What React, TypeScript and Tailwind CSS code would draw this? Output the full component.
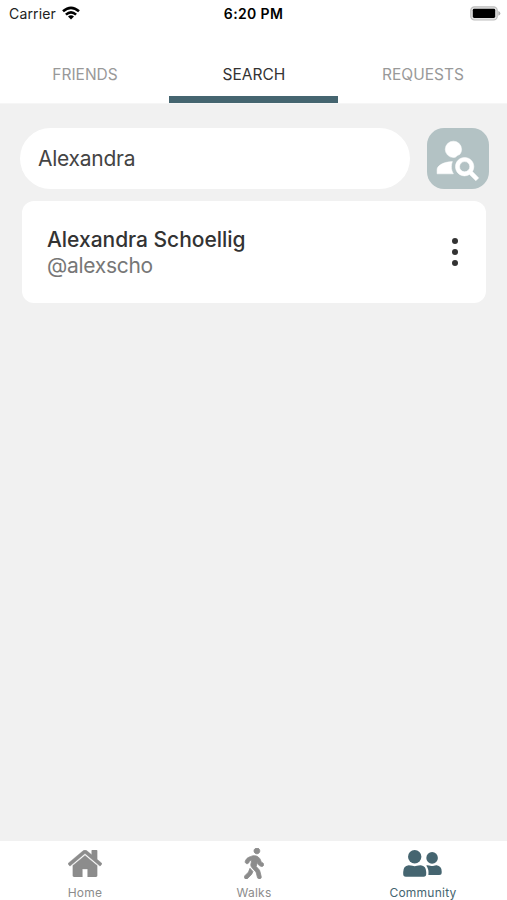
import React from 'react';
import { FaWalking } from 'react-icons/fa';

const WifiIcon = () => (
  <svg viewBox="0 0 18 14" className="w-[18px] h-[14px] relative -top-px" fill="none" stroke="#000" strokeWidth="2.6">
    <path d="M1 5.3 Q9 -1.7 17 5.3" />
    <path d="M3.9 8.6 Q9 4.1 14.1 8.6" />
    <path d="M9 13.6 L6 10.6 Q9 8 12 10.6 Z" fill="#000" stroke="none" />
  </svg>
);

const BatteryIcon = () => (
  <svg viewBox="0 0 31 15" className="w-[31px] h-[15px] relative -top-px">
    <rect x="0.8" y="0.8" width="26.4" height="13.2" rx="3.6" fill="#e4e4e4" stroke="#bdbdbd" strokeWidth="1.2" />
    <rect x="2.8" y="2.8" width="22.4" height="9.2" rx="1.4" fill="#000" />
    <path d="M28.3 5 Q30.4 6 30.4 7.4 Q30.4 8.8 28.3 9.8 Z" fill="#b0b0b0" />
  </svg>
);

const AccountSearchIcon = () => (
  <svg viewBox="0 0 24 24" className="w-[49px] h-[49px] mr-[2px] mb-[2px] shrink-0" fill="#fff" stroke="#fff" strokeWidth="0.25">
    <path d="M15.5,12C18,12 20,14 20,16.5C20,17.38 19.75,18.21 19.31,18.9L22.39,22L21,23.39L17.88,20.32C17.19,20.75 16.37,21 15.5,21C13,21 11,19 11,16.5C11,14 13,12 15.5,12M15.5,14A2.5,2.5 0 0,0 13,16.5A2.5,2.5 0 0,0 15.5,19A2.5,2.5 0 0,0 18,16.5A2.5,2.5 0 0,0 15.5,14M10,4A4,4 0 0,1 14,8C14,8.91 13.69,9.75 13.18,10.43C12.32,10.75 11.55,11.26 10.91,11.9L10,12A4,4 0 0,1 6,8A4,4 0 0,1 10,4M2,20V18C2,15.88 5.31,14.14 9.5,14C9.18,14.78 9,15.62 9,16.5C9,17.79 9.38,19 10,20H2Z" />
  </svg>
);

const HomeIcon = () => (
  <svg viewBox="24 253 1616 1283" className="w-[34px] h-[27px]" fill="currentColor" stroke="currentColor" strokeWidth="20">
    <path d="M1408 992v480q0 26-19 45t-45 19h-384v-384h-256v384h-384q-26 0-45-19t-19-45v-480q0-1 .5-3t.5-3l575-474 575 474q1 2 1 6zm223-69l-62 74q-8 9-21 11h-3q-13 0-21-7l-692-577-692 577q-12 8-24 7-13-2-21-11l-62-74q-8-10-7-23.5t11-21.5l719-599q32-26 76-26t76 26l244 204v-195q0-14 9-23t23-9h192q14 0 23 9t9 23v408l219 182q10 8 11 21.5t-7 23.5z" />
  </svg>
);

const PeopleIcon = () => (
  <svg viewBox="0 0 39 27" className="w-[39px] h-[27px]" fill="currentColor">
    <circle cx="11.7" cy="6.8" r="6.7" />
    <path d="M5.6 15.2 Q8.2 15.2 9.4 15.8 Q11.7 16.5 14 15.8 Q15.2 15.2 17.8 15.2 Q23.2 16 23.2 22 V24 Q23.2 26.7 20.6 26.7 H2.8 Q0.2 26.7 0.2 24 V22 Q0.2 16 5.6 15.2 Z" />
    <circle cx="29.1" cy="7.9" r="5.8" />
    <path d="M23.2 15.4 Q26 15.2 27.2 15.7 Q29.1 16.3 31 15.7 Q32.2 15.2 33.6 15.3 Q38.7 16.2 38.7 21.4 V22.4 Q38.7 24.9 36.2 24.9 H25.4 Q26.1 19 23.2 15.4 Z" />
  </svg>
);

const tabs = [
  { label: 'FRIENDS', active: false },
  { label: 'SEARCH', active: true },
  { label: 'REQUESTS', active: false },
];

const navItems = [
  { label: 'Home', icon: <HomeIcon />, active: false },
  { label: 'Walks', icon: <FaWalking className="w-[20px] h-[31px] stroke-[14px]" />, active: false },
  { label: 'Community', icon: <PeopleIcon />, active: true },
];

const App: React.FC = () => {
  return (
    <div className="w-full h-[900px] flex flex-col bg-[#f1f1f1] font-['Inter',sans-serif] overflow-hidden">
      {/* Status bar */}
      <div className="h-7 bg-white grid grid-cols-3 items-center pl-[9px] pr-[6px] text-[14px] leading-none text-black shrink-0">
        <div className="flex items-center gap-[6px] text-[#222]">
          <span className="tracking-[0.15px]">Carrier</span>
          <WifiIcon />
        </div>
        <span className="text-center font-semibold tracking-[0.35px] mr-[3px]">6:20 PM</span>
        <div className="flex justify-end">
          <BatteryIcon />
        </div>
      </div>

      {/* Top tabs */}
      <div className="h-[76px] bg-white grid grid-cols-3 border-b border-[#f6f6f6] shrink-0">
        {tabs.map(tab => (
          <button
            key={tab.label}
            className={`pt-[18px] text-[15.5px] border-b-[7px] ${tab.active ? 'text-[#333] border-[#456570]' : 'text-[#999] border-transparent'}`}
          >
            <span className="block h-[50px] leading-[58px] pl-px">{tab.label}</span>
          </button>
        ))}
      </div>

      <main className="flex-1 pt-6">
        <div className="flex items-center justify-between pl-5 pr-[18px]">
          <input
            readOnly
            value="Alexandra"
            className="w-[390px] h-[61px] rounded-full bg-white px-[18px] text-[21px] tracking-[-0.25px] text-[#444] outline-none"
          />
          <button className="w-[62px] h-[61px] rounded-[17px] bg-[#b3c2c4] flex items-center justify-center">
            <AccountSearchIcon />
          </button>
        </div>

        <div className="mt-3 ml-[22px] mr-[21px] h-[102px] rounded-xl bg-white flex items-center justify-between pl-[25px] pr-7">
          <div className="leading-[26px] text-[21px] pt-[2px]">
            <p className="font-medium text-[#333] tracking-[-0.03px]">Alexandra Schoellig</p>
            <p className="text-[#777] tracking-[-0.3px]">@alexscho</p>
          </div>
          <div className="flex flex-col gap-[4.5px]">
            <span className="w-[6.5px] h-[6.5px] rounded-full bg-[#333]"></span>
            <span className="w-[6.5px] h-[6.5px] rounded-full bg-[#333]"></span>
            <span className="w-[6.5px] h-[6.5px] rounded-full bg-[#333]"></span>
          </div>
        </div>
      </main>

      {/* Bottom navigation */}
      <nav className="h-[59px] bg-white grid grid-cols-3 shrink-0">
        {navItems.map(item => (
          <div key={item.label} className={`flex flex-col items-center pt-[6px] ${item.active ? 'text-[#456570]' : 'text-[#8c8c8c]'}`}>
            <div className="h-8 flex items-center">{item.icon}</div>
            <span className="mt-[6px] pl-px text-[12px] leading-[15px] tracking-[0.25px]">{item.label}</span>
          </div>
        ))}
      </nav>
    </div>
  );
};

export default App;
